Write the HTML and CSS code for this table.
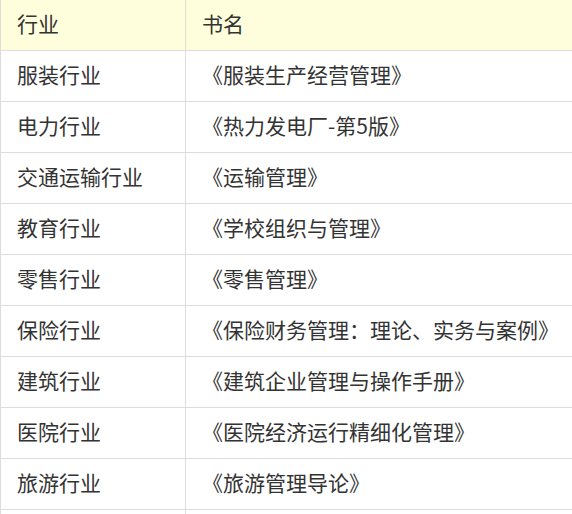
FILE: index.html
```html
<!DOCTYPE html>
<html lang="zh">
<head>
<meta charset="utf-8">
<link rel="stylesheet" href="styles.css">
</head>
<body>
<table class="books">
  <thead>
    <tr><th class="c1">行业</th><th class="c2">书名</th></tr>
  </thead>
  <tbody>
    <tr><td>服装行业</td><td>《服装生产经营管理》</td></tr>
    <tr><td>电力行业</td><td>《热力发电厂-第5版》</td></tr>
    <tr><td>交通运输行业</td><td>《运输管理》</td></tr>
    <tr><td>教育行业</td><td>《学校组织与管理》</td></tr>
    <tr><td>零售行业</td><td>《零售管理》</td></tr>
    <tr><td>保险行业</td><td>《保险财务管理：理论、实务与案例》</td></tr>
    <tr><td>建筑行业</td><td>《建筑企业管理与操作手册》</td></tr>
    <tr><td>医院行业</td><td>《医院经济运行精细化管理》</td></tr>
    <tr><td>旅游行业</td><td>《旅游管理导论》</td></tr>
    <tr class="more"><td></td><td></td></tr>
  </tbody>
</table>
</body>
</html>
```
FILE: styles.css
```css
html, body {
  margin: 0;
  padding: 0;
  background: #fff;
  overflow: hidden;
}
.books {
  border-collapse: collapse;
  width: 620px;
  font-family: "Noto Sans CJK SC", "Microsoft YaHei", sans-serif;
  font-size: 21px;
  color: #333;
}
.books th,
.books td {
  border: 1px solid #dddddd;
  padding: 0 16px 4px;
  height: 50px;
  line-height: 46px;
  text-align: left;
  font-weight: normal;
  white-space: nowrap;
  box-sizing: border-box;
}
.books thead th {
  background: #fffedc;
  border-top: none;
}
.books .c1 {
  width: 185px;
}
.books tr.more td:first-child {
  border-top: none;
}
```
